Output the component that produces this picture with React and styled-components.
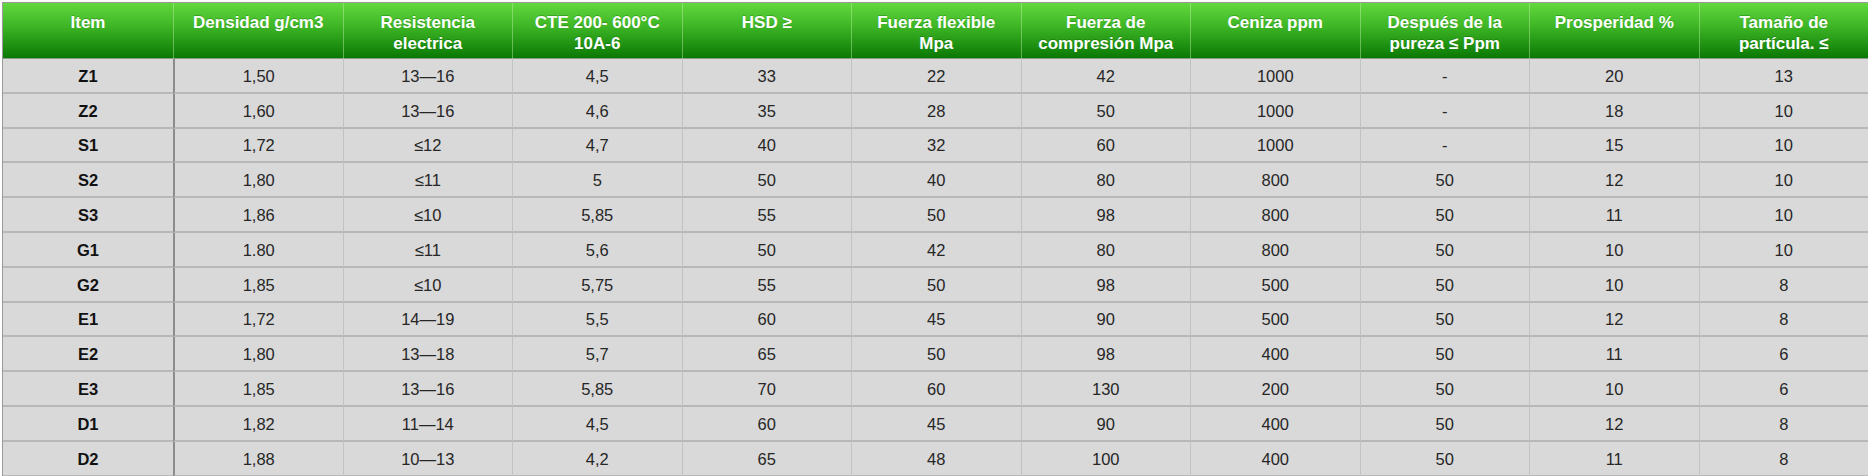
import React from "react";
import styled, { createGlobalStyle } from "styled-components";

const columns = [
  ["Item"],
  ["Densidad g/cm3"],
  ["Resistencia", "electrica"],
  ["CTE 200- 600°C", "10A-6"],
  ["HSD ≥"],
  ["Fuerza flexible", "Mpa"],
  ["Fuerza de", "compresión Mpa"],
  ["Ceniza ppm"],
  ["Después de la", "pureza ≤ Ppm"],
  ["Prosperidad %"],
  ["Tamaño de", "partícula. ≤"],
];

const rows = [
  ["Z1", "1,50", "13—16", "4,5", "33", "22", "42", "1000", "-", "20", "13"],
  ["Z2", "1,60", "13—16", "4,6", "35", "28", "50", "1000", "-", "18", "10"],
  ["S1", "1,72", "≤12", "4,7", "40", "32", "60", "1000", "-", "15", "10"],
  ["S2", "1,80", "≤11", "5", "50", "40", "80", "800", "50", "12", "10"],
  ["S3", "1,86", "≤10", "5,85", "55", "50", "98", "800", "50", "11", "10"],
  ["G1", "1.80", "≤11", "5,6", "50", "42", "80", "800", "50", "10", "10"],
  ["G2", "1,85", "≤10", "5,75", "55", "50", "98", "500", "50", "10", "8"],
  ["E1", "1,72", "14—19", "5,5", "60", "45", "90", "500", "50", "12", "8"],
  ["E2", "1,80", "13—18", "5,7", "65", "50", "98", "400", "50", "11", "6"],
  ["E3", "1,85", "13—16", "5,85", "70", "60", "130", "200", "50", "10", "6"],
  ["D1", "1,82", "11—14", "4,5", "60", "45", "90", "400", "50", "12", "8"],
  ["D2", "1,88", "10—13", "4,2", "65", "48", "100", "400", "50", "11", "8"],
];

const GlobalStyle = createGlobalStyle`
  html, body {
    margin: 0;
    background: #ffffff;
  }
  body {
    font-family: "Liberation Sans", Arial, sans-serif;
  }
`;

const Page = styled.div`
  padding: 2px 0 0 2px;
  width: 1868px;
  height: 476px;
  overflow: hidden;
  box-sizing: border-box;
`;

const Table = styled.div`
  display: grid;
  width: 1865px;
  grid-template-columns: 170px repeat(10, 169.5px);
  grid-template-rows: 56px repeat(12, 34.8px);
  border: 1px solid #9a9a9a;
  border-bottom: none;
  background: #d9d9d9;
`;

const HeadCell = styled.div`
  background: linear-gradient(to bottom, #62d83d 0%, #3bb324 45%, #0a7804 100%);
  color: #ffffff;
  font-weight: bold;
  font-size: 17px;
  line-height: 21px;
  text-align: center;
  padding-top: 9px;
  box-sizing: border-box;
  border-left: ${(p) => (p.$first ? "none" : "1px solid rgba(190, 240, 170, 0.45)")};
  border-bottom: 1px solid #8a9a88;
  text-shadow: 0 -1px 0 rgba(0, 60, 0, 0.25);
`;

const Cell = styled.div`
  display: flex;
  align-items: center;
  justify-content: center;
  box-sizing: border-box;
  padding-top: 2px;
  font-size: 16.5px;
  color: ${(p) => (p.$item ? "#111111" : "#262626")};
  font-weight: ${(p) => (p.$item ? "bold" : "normal")};
  background: #d9d9d9;
  border-bottom: 2px solid #b8b8b8;
  border-left: ${(p) =>
    p.$first ? "none" : p.$afterItem ? "2px solid #8c8c8c" : "1px solid #c2c2c2"};
`;

export default function App() {
  return (
    <Page>
      <GlobalStyle />
      <Table>
        {columns.map((lines, i) => (
          <HeadCell key={"h" + i} $first={i === 0}>
            {lines.map((l, j) => (
              <div key={j}>{l}</div>
            ))}
          </HeadCell>
        ))}
        {rows.map((row, r) =>
          row.map((value, c) => (
            <Cell
              key={r + "-" + c}
              $item={c === 0}
              $first={c === 0}
              $afterItem={c === 1}
            >
              {value}
            </Cell>
          ))
        )}
      </Table>
    </Page>
  );
}
